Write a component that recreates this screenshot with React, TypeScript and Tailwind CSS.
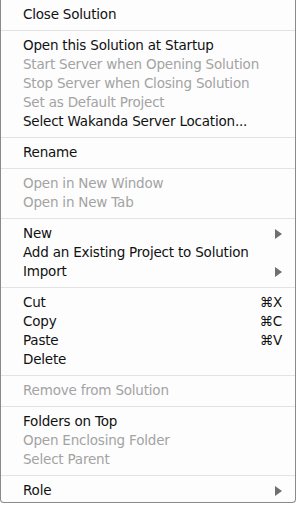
import React from 'react';

type Item = { label: string; disabled?: boolean; sub?: boolean; key?: string };

const groups: Item[][] = [
    [{ label: 'Close Solution' }],
    [
        { label: 'Open this Solution at Startup' },
        { label: 'Start Server when Opening Solution', disabled: true },
        { label: 'Stop Server when Closing Solution', disabled: true },
        { label: 'Set as Default Project', disabled: true },
        { label: 'Select Wakanda Server Location...' },
    ],
    [{ label: 'Rename' }],
    [
        { label: 'Open in New Window', disabled: true },
        { label: 'Open in New Tab', disabled: true },
    ],
    [
        { label: 'New', sub: true },
        { label: 'Add an Existing Project to Solution' },
        { label: 'Import', sub: true },
    ],
    [
        { label: 'Cut', key: '⌘X' },
        { label: 'Copy', key: '⌘C' },
        { label: 'Paste', key: '⌘V' },
        { label: 'Delete' },
    ],
    [{ label: 'Remove from Solution', disabled: true }],
    [
        { label: 'Folders on Top' },
        { label: 'Open Enclosing Folder', disabled: true },
        { label: 'Select Parent', disabled: true },
    ],
    [{ label: 'Role', sub: true }],
];

const Arrow = () => (
    <svg width="7" height="10" viewBox="0 0 7 10" className="shrink-0 mr-[1px]">
        <path d="M0 0 L7 5 L0 10 Z" fill="#6f6f6f" />
    </svg>
);

const MenuRow = ({ item }: { item: Item }) => (
    <div className={`h-[19px] flex items-center pl-[22px] pr-[12px] ${item.disabled ? 'text-[#a3a3a3]' : 'text-[#111]'}`}>
        <span className="flex-1 whitespace-nowrap">{item.label}</span>
        {item.key && <span className="whitespace-nowrap mr-[1px]">{item.key}</span>}
        {item.sub && <Arrow />}
    </div>
);

const App = () => {
    return (
        <div className="w-[297px] h-[505px] bg-white overflow-hidden" style={{ fontFamily: '"DejaVu Sans", "Liberation Sans", sans-serif' }}>
            <div className="w-[296px] h-[503px] bg-[#fdfdfd] border-l border-r border-b border-[#8a8a8a] rounded-b-[4px] pt-[5px] text-[13.5px] leading-[19px] tracking-[-0.2px]">
                {groups.map((g, gi) => (
                    <div key={gi}>
                        {gi > 0 && <div className="h-[12px] flex items-center"><div className="h-px w-full bg-[#e3e3e3]" /></div>}
                        {g.map((item) => <MenuRow key={item.label} item={item} />)}
                    </div>
                ))}
            </div>
        </div>
    );
};

export default App;
